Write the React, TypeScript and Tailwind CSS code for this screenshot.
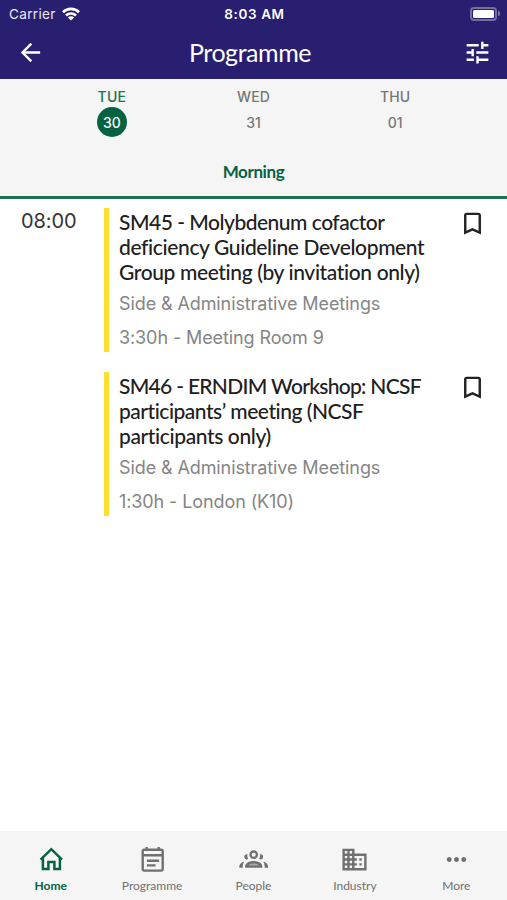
import type { ComponentType } from "react";
import clsx from "clsx";
import { MdArrowBack, MdBookmarkBorder, MdDomain, MdMoreHoriz, MdTune } from "react-icons/md";

type IconProps = { className?: string };

type Session = {
  time?: string;
  title: { text: string; tracking: string }[];
  track: string;
  place: string;
};

const days = [
  { name: "TUE", date: "30", active: true },
  { name: "WED", date: "31" },
  { name: "THU", date: "01" },
];

const sessions: Session[] = [
  {
    time: "08:00",
    title: [
      { text: "SM45 - Molybdenum cofactor", tracking: "tracking-[-0.5px]" },
      { text: "deficiency Guideline Development", tracking: "tracking-[-0.37px]" },
      { text: "Group meeting (by invitation only)", tracking: "tracking-[-0.38px]" },
    ],
    track: "Side & Administrative Meetings",
    place: "3:30h - Meeting Room 9",
  },
  {
    title: [
      { text: "SM46 - ERNDIM Workshop: NCSF", tracking: "tracking-[-0.7px]" },
      { text: "participants’ meeting (NCSF", tracking: "tracking-[-0.48px]" },
      { text: "participants only)", tracking: "tracking-[-0.38px]" },
    ],
    track: "Side & Administrative Meetings",
    place: "1:30h - London (K10)",
  },
];

function HomeIcon({ className }: IconProps) {
  return (
    <svg viewBox="0 0 29 29" className={className} fill="none" stroke="currentColor" strokeWidth="2.5">
      <path d="M4.6 14.6 15.3 4.2 26 14.6" />
      <path d="M6.9 13v11.1h5.5v-7.2h6v7.2h5.5V13" />
    </svg>
  );
}

function ProgrammeIcon({ className }: IconProps) {
  return (
    <svg viewBox="0 0 29 29" className={className} fill="none" stroke="currentColor" strokeWidth="2.4">
      <rect x="4.7" y="4.7" width="20" height="20.9" rx="1.6" />
      <path d="M8.7 2v3M20.7 2v3M4.7 10.2h20M8.9 15.8h12.2M8.9 20.4h8.6" />
    </svg>
  );
}

function PeopleIcon({ className }: IconProps) {
  return (
    <svg viewBox="0 0 29 29" className={className} fill="currentColor">
      <circle cx="14.7" cy="9.7" r="3.2" fill="none" stroke="currentColor" strokeWidth="2.3" />
      <path d="M8.6 9.3a2.6 2.6 0 1 0 .7 4.7C8.3 12.7 8 11 8.6 9.3zM20.8 9.3a2.6 2.6 0 1 1-.7 4.7c1-1.300 1.300-3 .7-4.700z" />
      <path d="M6.1 22.7v-1.400c0-3.200 3.900-5.400 8.600-5.400s8.600 2.200 8.600 5.400v1.400z" />
      <path d="M9.500 20.500c1-1.300 2.800-1.900 5.200-1.900s4.200.6 5.200 1.900z" fill="#aaa" />
      <path d="M.2 22.700c0-3 1.300-5.200 5-6-1.200 1.600-1.500 3.500-1.500 6zM29.200 22.700c0-3-1.300-5.200-5-6 1.200 1.600 1.500 3.500 1.500 6z" />
    </svg>
  );
}

const tabs: { label: string; icon: ComponentType<IconProps>; active?: boolean }[] = [
  { label: "Home", icon: HomeIcon, active: true },
  { label: "Programme", icon: ProgrammeIcon },
  { label: "People", icon: PeopleIcon },
  { label: "Industry", icon: MdDomain },
  { label: "More", icon: MdMoreHoriz },
];

function StatusBar() {
  return (
    <div className="grid h-[27px] grid-cols-3 items-center pl-[9px] pr-[7px] font-['Inter',sans-serif] text-[13.5px]">
      <div className="flex items-center gap-[6px]">
        <span className="pt-px tracking-[0.35px] text-white/90">Carrier</span>
        <svg viewBox="0 0 18 14" className="h-[14px] w-[18px]" fill="none" stroke="currentColor" strokeWidth="2.7">
          <path d="M1 5.2a11.5 11.5 0 0 1 16 0" />
          <path d="M4 8.5a7.2 7.2 0 0 1 10 0" />
          <path d="M9 13.5 5.9 10.6a4.4 4.4 0 0 1 6.2 0z" fill="currentColor" stroke="none" />
        </svg>
      </div>
      <span className="pt-px text-center font-semibold tracking-[0.6px]">8:03 AM</span>
      <div className="flex items-center justify-end gap-px">
        <div className="h-[14px] w-[27px] rounded-[4px] border-2 border-white/35 p-px">
          <div className="h-full rounded-[1.5px] bg-white" />
        </div>
        <div className="h-[5px] w-[2px] rounded-r-full bg-white/40" />
      </div>
    </div>
  );
}

function SessionRow({ session }: { session: Session }) {
  return (
    <article className="flex h-[144px]">
      <div className="w-[104px] shrink-0 pl-[21px] pt-px font-['Inter',sans-serif] text-[20px] leading-[25px] tracking-[-0.1px] text-[#333]">
        {session.time}
      </div>
      <div className="w-[5px] shrink-0 bg-[#ffe02f]" />
      <div className="flex-1 whitespace-nowrap pl-[10px] pt-px">
        <h2 className="text-[21px] font-medium leading-[25px] text-[#202020] [font-variant-ligatures:none]">
          {session.title.map((line) => (
            <span key={line.text} className={clsx("block w-max", line.tracking)}>{line.text}</span>
          ))}
        </h2>
        <div className="mt-2 flex flex-col gap-[10px] font-['Inter',sans-serif] text-[18px] leading-[24px] tracking-[-0.1px] text-[#858585]">
          <p>{session.track}</p>
          <p>{session.place}</p>
        </div>
      </div>
      <MdBookmarkBorder className="mr-5 mt-px size-[29px] shrink-0 text-[#222]" />
    </article>
  );
}

export default function App() {
  return (
    <div className="flex h-[900px] w-[507px] flex-col overflow-hidden bg-white font-['Lato',sans-serif]">
      <header className="h-[79px] bg-[#291f70] text-white">
        <StatusBar />
        <div className="flex h-[51px] items-center justify-between pl-4 pr-[15px]">
          <MdArrowBack className="size-[29px]" />
          <h1 className="mr-[8px] text-[25px] leading-none tracking-[-0.45px]">Programme</h1>
          <MdTune className="size-[29px]" />
        </div>
      </header>

      <section className="flex h-[120px] shrink-0 flex-col border-b-[3px] border-[#1a7350] bg-[#f5f5f5]">
        <div className="grid grid-cols-3 pl-[41px] pr-[41px] pt-[9px] font-['Inter',sans-serif] text-[14px] font-medium text-[#777]">
          {days.map((day) => (
            <div key={day.name} className={clsx("flex flex-col items-center", day.active && "text-[#1a7350]")}>
              <span className="leading-[17px] tracking-[0.2px]">{day.name}</span>
              <span
                className={clsx(
                  "mt-[2px] flex size-[30px] items-center justify-center rounded-full",
                  day.active && "bg-[#066342] text-white",
                )}
              >
                {day.date}
              </span>
            </div>
          ))}
        </div>
        <div className="mt-[25px] text-center text-[17px] font-bold leading-[20px] tracking-[-0.4px] text-[#066342]">Morning</div>
      </section>

      <main className="flex flex-1 flex-col gap-5 pt-[9px]">
        {sessions.map((session) => (
          <SessionRow key={session.place} session={session} />
        ))}
      </main>

      <nav className="grid h-[69px] grid-cols-5 bg-[#f5f5f5] pt-[14px]">
        {tabs.map(({ label, icon: Icon, active }) => (
          <div key={label} className={clsx("flex flex-col items-center", active ? "font-bold text-[#066342]" : "text-[#707070]")}>
            <Icon className="size-[29px]" />
            <span className="mt-[4px] text-[12px] leading-[15px]">{label}</span>
          </div>
        ))}
      </nav>
    </div>
  );
}
